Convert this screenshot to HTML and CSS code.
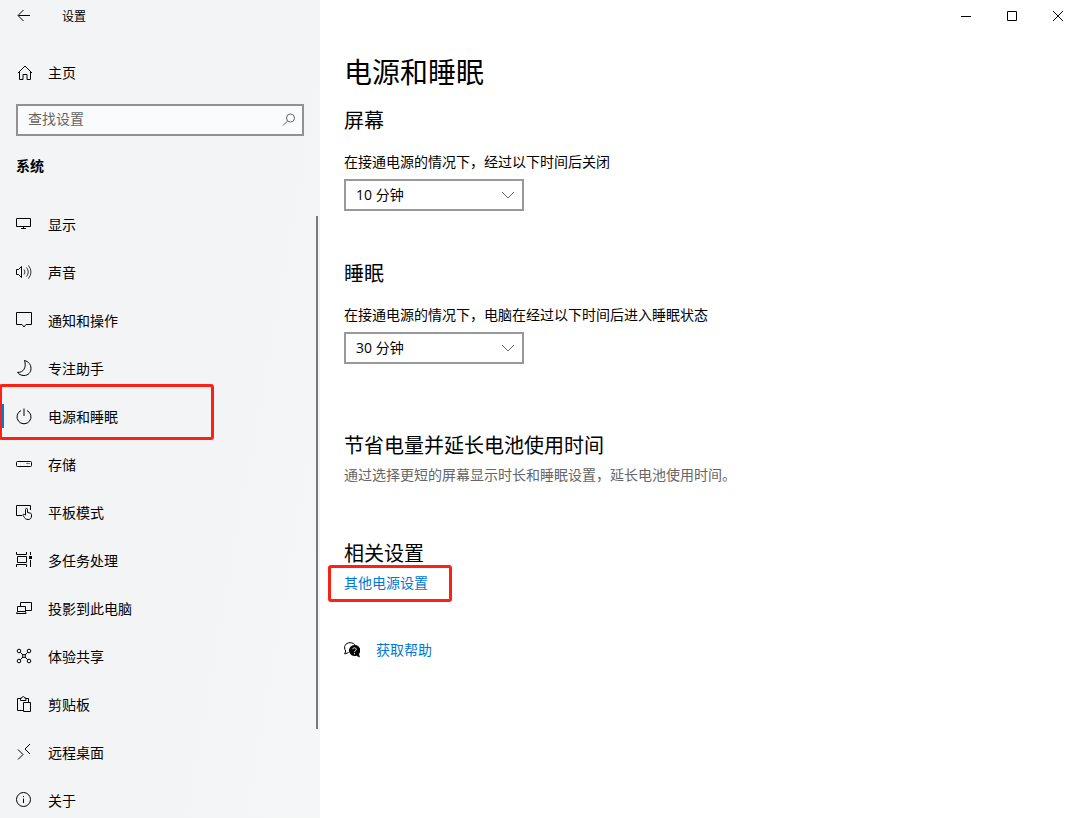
FILE: index.html
```html
<!DOCTYPE html>
<html lang="zh-CN">
<head>
    <meta charset="UTF-8">
    <meta name="viewport" content="width=device-width, initial-scale=1.0">
    <title>设置</title>
    <link rel="stylesheet" href="styles.css">
</head>
<body>
    <div class="window">
        <aside class="sidebar">
            <header class="title-bar">
                <button type="button" class="back-button" aria-label="返回">
                    <svg class="icon" viewBox="0 0 20 20"><path d="M16 9.500H4.500M9.500 4L4 9.500l5.500 5.500"/></svg>
                </button>
                <span class="app-title">设置</span>
            </header>

            <a href="#" class="nav-link">
                <svg class="icon" viewBox="0 0 20 20"><path d="M4 11L11 4l7 7M5.500 10v7.500h3.500v-5h4v5h3.500V10"/></svg>
                <span>主页</span>
            </a>

            <div class="search">
                <input type="text" class="search-input" placeholder="查找设置" aria-label="查找设置">
                <svg class="search-icon" viewBox="0 0 16 16"><circle cx="9.500" cy="6" r="4"/><path d="M6.500 9L2 13.500"/></svg>
            </div>

            <h2 class="nav-title">系统</h2>

            <nav class="nav">
                <ul class="nav-list">
                    <li><a href="#" class="nav-link">
                        <svg class="icon" viewBox="0 0 20 20"><path d="M2.500 4.500h14v8h-14zM9.500 12.500v2M7 14.500h5"/></svg>
                        <span>显示</span>
                    </a></li>
                    <li><a href="#" class="nav-link">
                        <svg class="icon" viewBox="0 0 20 20"><path d="M2.500 7.500h2l3-3v11l-3-3h-2z"/><path class="thin" d="M10 7.500q2 2.500 0 5M12.500 5.500q3.500 4.500 0 9M14.500 3.500q5 6.500 0 13"/></svg>
                        <span>声音</span>
                    </a></li>
                    <li><a href="#" class="nav-link">
                        <svg class="icon" viewBox="0 0 20 20"><path d="M2.500 2.500h15v12H12l-2 2.500-2-2.500H2.500z"/></svg>
                        <span>通知和操作</span>
                    </a></li>
                    <li><a href="#" class="nav-link">
                        <svg class="icon" viewBox="0 0 20 20"><path d="M10.500 2.500C14.500 3.500 17 6.500 17 10.500c0 4-3 7-7 7-3 0-5.500-1.300-6.500-3.200C9.500 15 12.800 9 10.500 2.500z"/></svg>
                        <span>专注助手</span>
                    </a></li>
                    <li><a href="#" class="nav-link active highlight">
                        <svg class="icon" viewBox="0 0 20 20"><path d="M10 2.500V10M7 4.500a7 7 0 1 0 6 0"/></svg>
                        <span>电源和睡眠</span>
                    </a></li>
                    <li><a href="#" class="nav-link">
                        <svg class="icon" viewBox="0 0 20 20"><rect x="2.500" y="7.500" width="15" height="5" rx="1"/><path d="M12.500 9.500h1M14.500 9.500h1"/></svg>
                        <span>存储</span>
                    </a></li>
                    <li><a href="#" class="nav-link">
                        <svg class="icon" viewBox="0 0 20 20"><path d="M8 13.500H2.500v-10h14V8M11.500 13V7.500c0-1.500 2-1.500 2 0v3l3 .700c.700.200 1 .600 1 1.300V14c0 2-1 3.500-3.500 3.500-2 0-2.700-.700-3.500-2l-1.500-2c-.500-1 .700-1.700 1.500-1z"/></svg>
                        <span>平板模式</span>
                    </a></li>
                    <li><a href="#" class="nav-link">
                        <svg class="icon" viewBox="0 0 20 20"><path d="M2.500 2v2.500h10V2M3.500 6.500h9v6h-9zM2.500 17v-2.500h10V17M16.500 2v3M16.500 10v7"/><path class="solid" d="M15 6h3v3h-3z"/></svg>
                        <span>多任务处理</span>
                    </a></li>
                    <li><a href="#" class="nav-link">
                        <svg class="icon" viewBox="0 0 20 20"><path d="M6.500 8.500v-4h11v8h-6M3.500 13.500v-5h8v5M3.500 13.500h8l.500 2H2.500z"/></svg>
                        <span>投影到此电脑</span>
                    </a></li>
                    <li><a href="#" class="nav-link">
                        <svg class="icon" viewBox="0 0 20 20"><circle cx="5" cy="5" r="1.800"/><circle cx="15" cy="5" r="1.800"/><circle cx="5" cy="15" r="1.800"/><circle cx="15" cy="15" r="1.800"/><circle cx="10" cy="10" r="1.500"/><path d="M6.300 6.300L9 9M13.700 6.300L11 9M6.300 13.700L9 11M13.700 13.700L11 11"/></svg>
                        <span>体验共享</span>
                    </a></li>
                    <li><a href="#" class="nav-link">
                        <svg class="icon" viewBox="0 0 20 20"><path d="M9.500 16.500h-6v-12h3M11.500 4.500h3v4M6.500 6.500v-2.500h1.500c0-2 2.500-2 2.500 0H12v2.500zM9.500 8.500h7v9h-7z"/></svg>
                        <span>剪贴板</span>
                    </a></li>
                    <li><a href="#" class="nav-link">
                        <svg class="icon" viewBox="0 0 20 20"><path d="M4 7.500l5 5-5 5M16 2l-5 5 5 5"/></svg>
                        <span>远程桌面</span>
                    </a></li>
                    <li><a href="#" class="nav-link">
                        <svg class="icon" viewBox="0 0 20 20"><circle cx="9.500" cy="9.500" r="7"/><path d="M9.500 8.500V13M9.500 6v1"/></svg>
                        <span>关于</span>
                    </a></li>
                </ul>
                <div class="scroll-thumb"></div>
            </nav>
        </aside>

        <div class="content">
            <div class="window-controls">
                <button type="button" class="control" aria-label="最小化"><svg viewBox="0 0 12 12"><path d="M1 6.500h10"/></svg></button>
                <button type="button" class="control" aria-label="最大化"><svg viewBox="0 0 12 12"><path d="M1.500 1.500h9v9h-9z"/></svg></button>
                <button type="button" class="control" aria-label="关闭"><svg viewBox="0 0 12 12"><path d="M1 1l10 10M11 1L1 11"/></svg></button>
            </div>

            <main class="page">
                <h1>电源和睡眠</h1>

                <section class="setting">
                    <h2>屏幕</h2>
                    <label for="screen-off">在接通电源的情况下，经过以下时间后关闭</label>
                    <div class="dropdown">
                        <select id="screen-off">
                            <option>5 分钟</option>
                            <option selected>10 分钟</option>
                            <option>30 分钟</option>
                        </select>
                        <svg class="chevron" viewBox="0 0 14 8"><path d="M1 1l6 6 6-6"/></svg>
                    </div>
                </section>

                <section class="setting">
                    <h2>睡眠</h2>
                    <label for="sleep-after">在接通电源的情况下，电脑在经过以下时间后进入睡眠状态</label>
                    <div class="dropdown">
                        <select id="sleep-after">
                            <option>10 分钟</option>
                            <option selected>30 分钟</option>
                            <option>1 小时</option>
                        </select>
                        <svg class="chevron" viewBox="0 0 14 8"><path d="M1 1l6 6 6-6"/></svg>
                    </div>
                </section>

                <section class="info">
                    <h2>节省电量并延长电池使用时间</h2>
                    <p>通过选择更短的屏幕显示时长和睡眠设置，延长电池使用时间。</p>
                </section>

                <section class="info">
                    <h2>相关设置</h2>
                    <a href="#" class="link highlight">其他电源设置</a>
                </section>

                <div class="help">
                    <svg class="help-icon" viewBox="0 0 16 16">
                        <path class="bubble" d="M4.500 10.500L.700 12l1-3C-1 5 1.500.700 6 .700c2.500 0 4.500 1 5.500 3"/>
                        <path class="bubble-solid" d="M10.500 3a5.500 5.500 0 1 0 1.700 10.700l3.800 1.800-1-3.500a5.500 5.500 0 0 0-4.500-9z"/>
                        <path class="question" d="M8.800 7.200c.200-2 3.400-1.800 3.400.200 0 1.300-1.700 1.300-1.700 2.800M10.500 11.200v1.100"/>
                    </svg>
                    <a href="#" class="link">获取帮助</a>
                </div>
            </main>
        </div>
    </div>
</body>
</html>
```

FILE: styles.css
```css
*,
*::before,
*::after {
    box-sizing: border-box;
}
body {
    margin: 0;
    font-family: "Open Sans", "Noto Sans CJK SC", sans-serif;
    font-size: 14px;
    line-height: 20px;
    color: #000;
    background: #fff;
}
h1, h2, p, ul {
    margin: 0;
    padding: 0;
    font-weight: normal;
}
a {
    color: inherit;
    text-decoration: none;
}
button {
    padding: 0;
    border: none;
    background: transparent;
    display: flex;
    align-items: center;
    justify-content: center;
}
svg {
    fill: none;
    stroke: #000;
    stroke-width: 1;
    flex-shrink: 0;
}
.window {
    display: flex;
    height: 100vh;
    overflow: hidden;
}

/* left pane */
.sidebar {
    width: 320px;
    flex-shrink: 0;
    display: flex;
    flex-direction: column;
    background: linear-gradient(100deg, #f2f4f6, #f3f4f6 60%, #f5f6f6);
}
.title-bar {
    display: flex;
    align-items: center;
    height: 32px;
    margin-bottom: 16px;
    flex-shrink: 0;
}
.back-button {
    width: 48px;
    height: 32px;
}
.app-title {
    margin-left: 14px;
    padding-top: 2px;
    font-size: 12px;
}
.icon {
    width: 20px;
    height: 20px;
}
.thin {
    stroke: #333;
}
.solid {
    fill: #000;
    stroke: none;
}
.nav-link {
    position: relative;
    display: flex;
    align-items: center;
    gap: 14px;
    height: 48px;
    padding: 0 14px;
    flex-shrink: 0;
}
.nav-link span {
    padding-top: 2px;
}
.nav-link:hover {
    background-color: rgba(0, 0, 0, 0.05);
}
.search {
    position: relative;
    margin: 8px 16px 20px;
}
.search-input {
    display: block;
    width: 100%;
    height: 32px;
    padding: 0 32px 3px 10px;
    border: 2px solid #909193;
    border-radius: 0;
    background: #fafbfc;
    font: inherit;
    color: #000;
}
.search-input::placeholder {
    color: #666;
    opacity: 1;
}
.search-icon {
    position: absolute;
    right: 7px;
    top: 8px;
    width: 16px;
    height: 16px;
    stroke: #666;
}
.nav-title {
    margin: 0 16px 24px;
    font-size: 14px;
    font-weight: bold;
}
.nav {
    position: relative;
    flex: 1;
    min-height: 0;
    overflow: hidden;
}
.nav-list {
    list-style: none;
}
.active::before {
    content: "";
    position: absolute;
    left: 0;
    top: 12px;
    width: 4px;
    height: 24px;
    background: #0078d7;
}
.scroll-thumb {
    position: absolute;
    top: 16px;
    right: 2px;
    width: 2px;
    height: 83%;
    background: #7a7a7a;
}

/* red marker frame */
.highlight {
    position: relative;
}
.highlight::after {
    content: "";
    position: absolute;
    border: 3px solid #fb2114;
    border-radius: 3px;
}
.nav-link.highlight::after {
    left: -1px;
    top: -8px;
    width: 215px;
    height: 56px;
}
.link.highlight::after {
    left: -16px;
    right: -24px;
    top: -8px;
    bottom: -9px;
}

/* right pane */
.content {
    flex: 1;
    min-width: 0;
}
.window-controls {
    display: flex;
    justify-content: flex-end;
}
.control {
    width: 46px;
    height: 32px;
}
.control svg {
    width: 12px;
    height: 12px;
}
.page {
    padding: 22px 24px 24px;
}
h1 {
    margin-bottom: 17px;
    font-size: 28px;
    line-height: 36px;
}
.page h2 {
    font-size: 20px;
    line-height: 28px;
}
.setting {
    margin-bottom: 49px;
}
.setting label {
    display: block;
    margin: 17px 0 7px;
}
.dropdown {
    position: relative;
    width: 180px;
}
select {
    display: block;
    width: 100%;
    height: 32px;
    padding: 0 32px 0 10px;
    border: 2px solid #999;
    border-radius: 0;
    background: #fff;
    appearance: none;
    font: inherit;
    color: #000;
}
.chevron {
    position: absolute;
    right: 9px;
    top: 12px;
    width: 14px;
    height: 8px;
    stroke: #666;
    pointer-events: none;
}
.info {
    display: flex;
    flex-direction: column;
    align-items: flex-start;
    gap: 5px;
    margin-bottom: 55px;
}
.setting + .info {
    margin-top: 68px;
}
.info p {
    color: #666;
}
.link {
    color: #0078d7;
}
.info:last-of-type {
    margin-bottom: 47px;
}
.help {
    display: flex;
    align-items: center;
    gap: 16px;
}
.help-icon {
    width: 16px;
    height: 16px;
}
.bubble-solid {
    fill: #000;
    stroke: none;
}
.question {
    stroke: #fff;
}
```
